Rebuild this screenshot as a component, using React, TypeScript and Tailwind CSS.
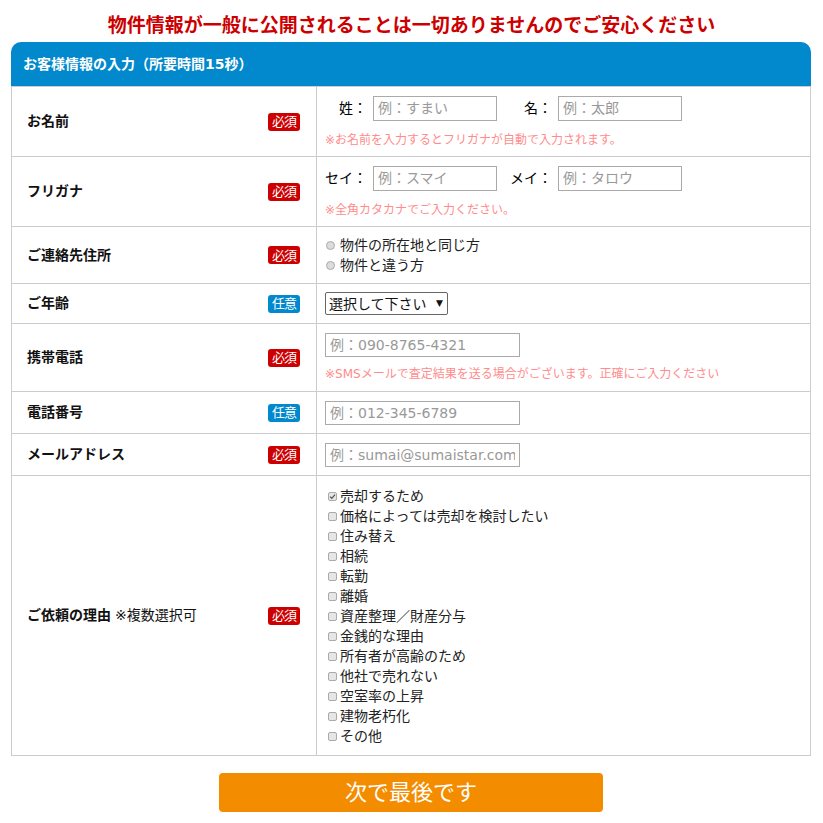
import React from 'react';

const FONT = '"DejaVu Sans", "Noto Sans CJK JP", sans-serif';

function Badge({ required }: { required: boolean }) {
  return (
    <span
      className={`inline-flex h-[18px] w-[32px] items-center justify-center rounded-[3px] text-[13px] leading-none tracking-[-1px] text-white ${
        required ? 'bg-[#cc0000]' : 'bg-[#0288cc]'
      }`}
    >
      {required ? '必須' : '任意'}
    </span>
  );
}

function TextInput({ placeholder, className }: { placeholder: string; className: string }) {
  return (
    <input
      type="text"
      placeholder={placeholder}
      className={`border border-[#aaaaaa] bg-white px-[4px] text-[14px] text-[#333] outline-none placeholder:text-[#999] ${className}`}
    />
  );
}

function Hint({ children }: { children: React.ReactNode }) {
  return <div className="text-[12px] leading-[16px] text-[#ff8c8c]">{children}</div>;
}

function Radio({ label }: { label: string }) {
  return (
    <label className="flex h-[20px] items-center text-[14px] text-[#222]">
      <span className="ml-[1px] mr-[5px] h-[9px] w-[9px] rounded-full border border-[#aaa] bg-[#dcdcdc]" />
      {label}
    </label>
  );
}

function Check({ label, checked }: { label: string; checked?: boolean }) {
  return (
    <label className="flex h-[20px] items-center text-[14px] text-[#222]">
      <span className="mr-[3px] flex h-[9px] w-[9px] items-center justify-center rounded-[2px] border border-[#aaa] bg-[#e6e6e6]">
        {checked && (
          <svg viewBox="0 0 10 10" className="h-[7px] w-[7px]">
            <path d="M1.5 5.2 L4 7.6 L8.6 2.4" fill="none" stroke="#555" strokeWidth="1.8" />
          </svg>
        )}
      </span>
      {label}
    </label>
  );
}

function Row({
  label,
  note,
  required,
  height,
  children,
}: {
  label: string;
  note?: string;
  required: boolean;
  height: string;
  children: React.ReactNode;
}) {
  return (
    <tr className={height}>
      <td className="w-[305px] border border-[#cccccc] pl-[15px] pr-[16px] align-middle">
        <div className="flex items-center justify-between">
          <span className="text-[14px] font-bold text-[#111]">
            {label}
            {note && <span className="ml-[4px] text-[14px] font-normal">{note}</span>}
          </span>
          <Badge required={required} />
        </div>
      </td>
      <td className="border border-[#cccccc] pl-[8px] align-middle">{children}</td>
    </tr>
  );
}

const reasons = [
  '売却するため',
  '価格によっては売却を検討したい',
  '住み替え',
  '相続',
  '転勤',
  '離婚',
  '資産整理／財産分与',
  '金銭的な理由',
  '所有者が高齢のため',
  '他社で売れない',
  '空室率の上昇',
  '建物老朽化',
  'その他',
];

export default function App() {
  return (
    <div className="min-h-[823px] bg-white pb-[12px]" style={{ fontFamily: FONT }}>
      <h1 className="pt-[11px] text-center text-[19px] font-bold leading-[28px] text-[#cc0000]">
        物件情報が一般に公開されることは一切ありませんのでご安心ください
      </h1>

      <div className="ml-[11px] mt-[3px] w-[800px]">
        <div className="flex h-[44px] items-center rounded-t-[10px] bg-[#0288cc] pl-[12px] text-[14px] font-bold text-white">
          お客様情報の入力（所要時間15秒）
        </div>
        <table className="w-full border-collapse">
          <tbody>
            <Row label="お名前" required height="h-[70px]">
              <div className="flex items-center">
                <span className="w-[42px] text-right text-[14px]">姓：</span>
                <TextInput placeholder="例：すまい" className="ml-[6px] h-[25px] w-[124px]" />
                <span className="ml-[13px] w-[42px] text-right text-[14px]">名：</span>
                <TextInput placeholder="例：太郎" className="ml-[6px] h-[25px] w-[124px]" />
              </div>
              <div className="mt-[11px]">
                <Hint>※お名前を入力するとフリガナが自動で入力されます。</Hint>
              </div>
            </Row>
            <Row label="フリガナ" required height="h-[70px]">
              <div className="flex items-center">
                <span className="w-[42px] text-right text-[14px]">セイ：</span>
                <TextInput placeholder="例：スマイ" className="ml-[6px] h-[25px] w-[124px]" />
                <span className="ml-[13px] w-[42px] text-right text-[14px]">メイ：</span>
                <TextInput placeholder="例：タロウ" className="ml-[6px] h-[25px] w-[124px]" />
              </div>
              <div className="mt-[11px]">
                <Hint>※全角カタカナでご入力ください。</Hint>
              </div>
            </Row>
            <Row label="ご連絡先住所" required height="h-[57px]">
              <Radio label="物件の所在地と同じ方" />
              <Radio label="物件と違う方" />
            </Row>
            <Row label="ご年齢" required={false} height="h-[40px]">
              <div className="relative h-[23px] w-[123px] rounded-[2px] border border-[#666]">
                <span className="absolute left-[3px] top-[1px] text-[14px] leading-[20px] text-[#111]">
                  選択して下さい
                </span>
                <span className="absolute right-[4px] top-[5px] text-[9px] leading-[10px] text-[#111]">▼</span>
              </div>
            </Row>
            <Row label="携帯電話" required height="h-[68px]">
              <TextInput placeholder="例：090-8765-4321" className="h-[24px] w-[195px]" />
              <div className="mt-[9px]">
                <Hint>※SMSメールで査定結果を送る場合がございます。正確にご入力ください</Hint>
              </div>
            </Row>
            <Row label="電話番号" required={false} height="h-[42px]">
              <TextInput placeholder="例：012-345-6789" className="block h-[24px] w-[195px]" />
            </Row>
            <Row label="メールアドレス" required height="h-[42px]">
              <TextInput placeholder="例：sumai@sumaistar.com" className="block h-[24px] w-[195px]" />
            </Row>
            <Row label="ご依頼の理由" note="※複数選択可" required height="h-[280px]">
              <div className="pl-[3px] pt-[1px]">
                {reasons.map((r, i) => (
                  <Check key={r} label={r} checked={i === 0} />
                ))}
              </div>
            </Row>
          </tbody>
        </table>
      </div>

      <div className="ml-[219px] mt-[17px]">
        <button className="h-[39px] w-[384px] rounded-[4px] bg-[#f48c00] text-[22px] text-white">
          次で最後です
        </button>
      </div>
    </div>
  );
}
